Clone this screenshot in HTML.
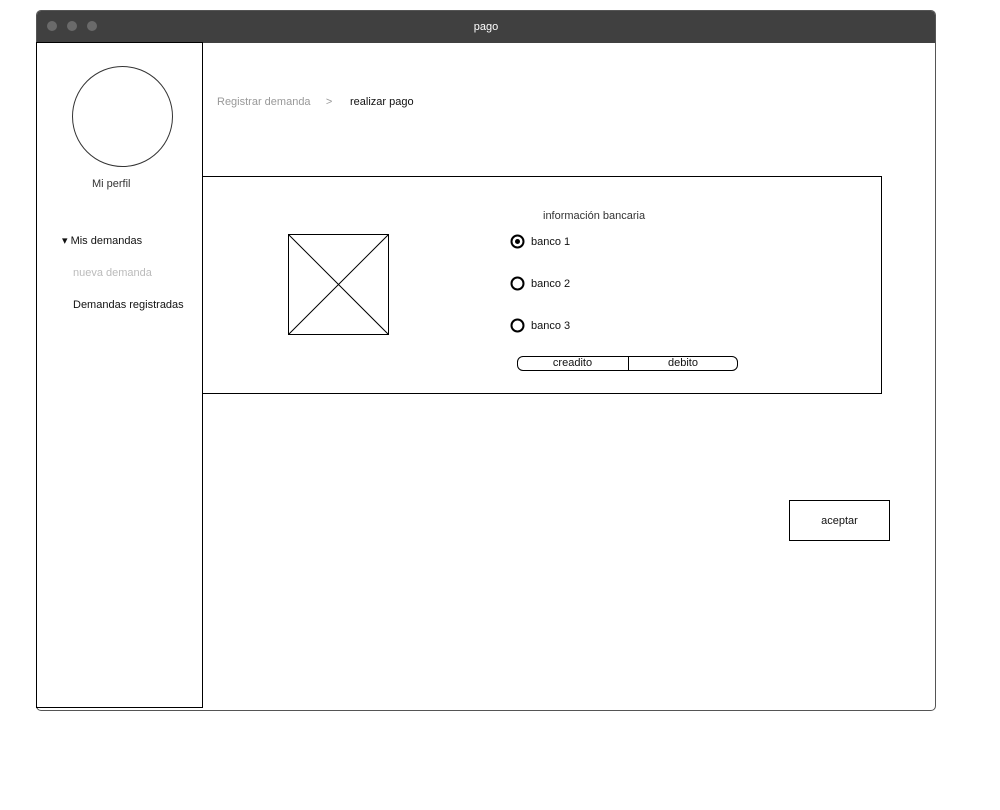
<!DOCTYPE html>
<html><head><style>
body{margin:0;width:1000px;height:810px;background:#fff;position:relative;font-family:"Liberation Sans",sans-serif;font-size:11px;color:#111}
.a{position:absolute}
</style></head><body>
<div class="a" style="left:36px;top:10px;width:898px;height:699px;border:1px solid #555;border-radius:5px;overflow:hidden">
<div class="a" style="left:0;top:0;width:898px;height:32px;background:#404040"></div>
<div class="a" style="left:10px;top:10px;width:10px;height:10px;border-radius:50%;background:#6a6a6a"></div>
<div class="a" style="left:30px;top:10px;width:10px;height:10px;border-radius:50%;background:#6a6a6a"></div>
<div class="a" style="left:50px;top:10px;width:10px;height:10px;border-radius:50%;background:#6a6a6a"></div>
<div class="a" style="left:0;top:10px;width:898px;text-align:center;color:#fff;font-size:11px">pago</div>
</div>
<div class="a" style="left:36px;top:42px;width:165px;height:664px;border:1px solid #000"></div>
<div class="a" style="left:72px;top:66px;width:99px;height:99px;border:1px solid #333;border-radius:50%"></div>
<div class="a" style="left:92px;top:178px;color:#333">Mi perfil</div>
<div class="a" style="left:62px;top:234px">&#9662; Mis demandas</div>
<div class="a" style="left:73px;top:267px;color:#bbb">nueva demanda</div>
<div class="a" style="left:73px;top:299px">Demandas registradas</div>
<div class="a" style="left:217px;top:96px;color:#999">Registrar demanda &nbsp;&nbsp;&nbsp;&nbsp;&gt;</div>
<div class="a" style="left:350px;top:96px">realizar pago</div>
<div class="a" style="left:202px;top:176px;width:679px;height:216px;border:1px solid #000;border-left:none"></div>
<svg class="a" style="left:288px;top:234px" width="101" height="101"><rect x="0.5" y="0.5" width="100" height="100" fill="none" stroke="#000"/><path d="M0 0L101 101M101 0L0 101" stroke="#000"/></svg>
<div class="a" style="left:543px;top:210px;color:#333">información bancaria</div>
<svg class="a" style="left:510px;top:234px" width="16" height="100"><circle cx="7.5" cy="7.5" r="6" fill="none" stroke="#000" stroke-width="2"/><circle cx="7.5" cy="7.5" r="2.5"/><circle cx="7.5" cy="49.5" r="6" fill="none" stroke="#000" stroke-width="2"/><circle cx="7.5" cy="91.5" r="6" fill="none" stroke="#000" stroke-width="2"/></svg>
<div class="a" style="left:531px;top:236px">banco 1</div>
<div class="a" style="left:531px;top:278px">banco 2</div>
<div class="a" style="left:531px;top:320px">banco 3</div>
<div class="a" style="left:517px;top:356px;width:219px;height:13px;border:1px solid #000;border-radius:6px"></div>
<div class="a" style="left:628px;top:356px;width:1px;height:15px;background:#000"></div>
<div class="a" style="left:517px;top:357px;width:111px;text-align:center">creadito</div>
<div class="a" style="left:629px;top:357px;width:108px;text-align:center">debito</div>
<div class="a" style="left:789px;top:500px;width:99px;height:39px;border:1px solid #000;text-align:center;line-height:41px">aceptar</div>
</body></html>
